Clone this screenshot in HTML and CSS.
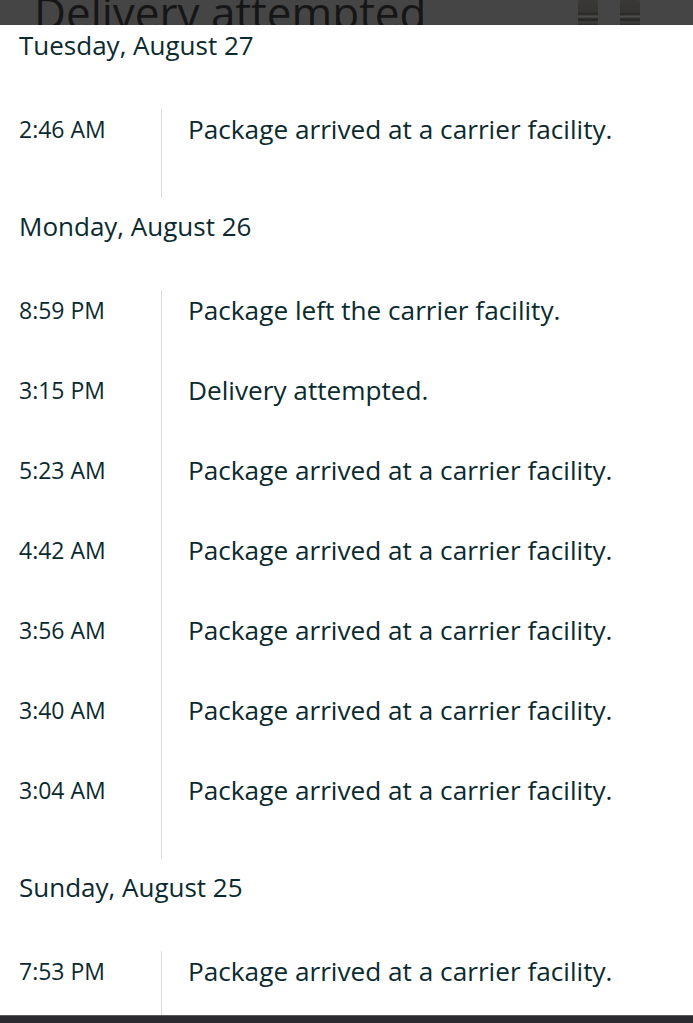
FILE: index.html
```html
<!DOCTYPE html>
<html lang="en">
<head>
<meta charset="utf-8">
<title>Tracking</title>
<link rel="stylesheet" href="styles.css">
</head>
<body>
<div class="band">
  <div class="band-title">Delivery attempted</div>
  <div class="bottles"><span class="bottle"></span><span class="bottle"></span></div>
</div>
<main class="timeline">
  <h2 class="day first">Tuesday, August 27</h2>
  <div class="group">
    <div class="row"><div class="time">2:46 AM</div><div class="desc">Package arrived at a carrier facility.</div></div>
  </div>
  <h2 class="day">Monday, August 26</h2>
  <div class="group">
    <div class="row"><div class="time">8:59 PM</div><div class="desc">Package left the carrier facility.</div></div>
    <div class="row"><div class="time">3:15 PM</div><div class="desc">Delivery attempted.</div></div>
    <div class="row"><div class="time">5:23 AM</div><div class="desc">Package arrived at a carrier facility.</div></div>
    <div class="row"><div class="time">4:42 AM</div><div class="desc">Package arrived at a carrier facility.</div></div>
    <div class="row"><div class="time">3:56 AM</div><div class="desc">Package arrived at a carrier facility.</div></div>
    <div class="row"><div class="time">3:40 AM</div><div class="desc">Package arrived at a carrier facility.</div></div>
    <div class="row"><div class="time">3:04 AM</div><div class="desc">Package arrived at a carrier facility.</div></div>
  </div>
  <h2 class="day">Sunday, August 25</h2>
  <div class="group">
    <div class="row"><div class="time">7:53 PM</div><div class="desc">Package arrived at a carrier facility.</div></div>
  </div>
</main>
<div class="navbar"></div>
</body>
</html>
```
FILE: styles.css
```css
html, body {
  margin: 0;
  padding: 0;
  background: #ffffff;
  font-family: "Open Sans", "Noto Sans", sans-serif;
  font-weight: 500;
  color: #0b2a2f;
}

.band {
  height: 25px;
  background: #454545;
  overflow: hidden;
  display: flex;
  align-items: flex-start;
}

.band-title {
  margin-left: 34px;
  font-size: 44px;
  line-height: 24px;
  color: #161616;
  white-space: nowrap;
}

.bottles {
  display: flex;
  gap: 22px;
  margin-left: auto;
  margin-right: 53px;
}

.bottle {
  display: block;
  width: 20px;
  height: 25px;
  background: linear-gradient(to bottom, #3a3937 0, #353431 50%, #242422 55%, #4c4c4a 66%, #262624 78%, #3d3d3b 90%, #2c2c2a 100%);
  border-radius: 2px 2px 0 0;
}

.timeline {
  padding: 0 19px;
}

.day {
  margin: 14px 0 50px;
  font-size: 26px;
  line-height: 28px;
  font-weight: 500;
}

.day.first {
  margin-top: 6px;
}

.row {
  display: grid;
  grid-template-columns: 142px 1fr;
}

.time {
  font-size: 23px;
  line-height: 40px;
  padding-bottom: 40px;
}

.desc {
  border-left: 1px solid #d7dbdb;
  padding-left: 26px;
  font-size: 26.2px;
  line-height: 40px;
  padding-bottom: 40px;
  white-space: nowrap;
}

.row:last-child .desc {
  padding-bottom: 49px;
}

.navbar {
  position: fixed;
  left: 0;
  right: 0;
  bottom: 0;
  height: 7px;
  background: #2a2a30;
  border-top: 1px solid #5a5a5e;
}
```
